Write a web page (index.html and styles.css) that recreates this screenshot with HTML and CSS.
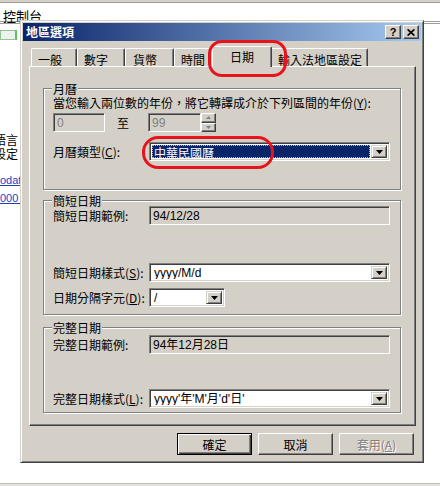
FILE: index.html
```html
<!DOCTYPE html>
<html lang="zh-Hant">
<head>
<meta charset="utf-8">
<title>地區選項</title>
<link rel="stylesheet" href="styles.css">
</head>
<body>
<div class="screen">
  <div class="bg-top"></div>
  <div class="bg-header">控制台</div>
  <div class="bg-main">
    <div class="bg-side">
      <div class="bg-box"></div>
      <div class="bg-text first">語言</div>
      <div class="bg-text">設定</div>
      <a class="bg-link first">odat</a>
      <a class="bg-link">000 :</a>
    </div>
  </div>
  <div class="bg-bottom"></div>

  <div class="dialog">
    <div class="titlebar">
      <span class="title">地區選項</span>
      <div class="caption-btns">
        <span class="cap-btn help">?</span>
        <span class="cap-btn close"><svg width="8" height="7" viewBox="0 0 8 7"><path d="M0.6 0.4L7.4 6.6M7.4 0.4L0.6 6.6" stroke="#000" stroke-width="1.7"/></svg></span>
      </div>
    </div>

    <div class="tabs">
      <div class="tab t1">一般</div>
      <div class="tab t2">數字</div>
      <div class="tab t3">貨幣</div>
      <div class="tab t4">時間</div>
      <div class="tab sel">日期</div>
      <div class="tab t6">輸入法地區設定</div>
    </div>

    <div class="panel">
      <div class="group g1">
        <div class="legend">月曆</div>
        <div class="line">當您輸入兩位數的年份，將它轉譯成介於下列區間的年份(<u>Y</u>):</div>
        <div class="row r-range">
          <div class="edit disabled w-from">0</div>
          <span class="to">至</span>
          <div class="edit disabled w-to">99</div>
          <div class="spin">
            <span class="spin-btn"><svg width="5" height="3" viewBox="0 0 5 3"><path d="M2.5 0L5 3H0z" fill="#808080"/></svg></span>
            <span class="spin-btn"><svg width="5" height="3" viewBox="0 0 5 3"><path d="M0 0h5L2.5 3z" fill="#808080"/></svg></span>
          </div>
        </div>
        <div class="row r-type">
          <span class="lbl">月曆類型(<u>C</u>):</span>
          <div class="combo wide">
            <div class="combo-text selected">中華民國曆</div>
            <span class="dd"><svg width="7" height="4" viewBox="0 0 7 4"><path d="M0 0h7L3.5 4z" fill="#000"/></svg></span>
          </div>
        </div>
      </div>

      <div class="group g2">
        <div class="legend">簡短日期</div>
        <div class="row r-sample">
          <span class="lbl">簡短日期範例:</span>
          <div class="edit readonly wide">94/12/28</div>
        </div>
        <div class="row r-style">
          <span class="lbl">簡短日期樣式(<u>S</u>):</span>
          <div class="combo wide">
            <div class="combo-text">yyyy/M/d</div>
            <span class="dd"><svg width="7" height="4" viewBox="0 0 7 4"><path d="M0 0h7L3.5 4z" fill="#000"/></svg></span>
          </div>
        </div>
        <div class="row r-sep">
          <span class="lbl">日期分隔字元(<u>D</u>):</span>
          <div class="combo narrow">
            <div class="combo-text">/</div>
            <span class="dd"><svg width="7" height="4" viewBox="0 0 7 4"><path d="M0 0h7L3.5 4z" fill="#000"/></svg></span>
          </div>
        </div>
      </div>

      <div class="group g3">
        <div class="legend">完整日期</div>
        <div class="row r-sample3">
          <span class="lbl">完整日期範例:</span>
          <div class="edit readonly wide">94年12月28日</div>
        </div>
        <div class="row r-style3">
          <span class="lbl">完整日期樣式(<u>L</u>):</span>
          <div class="combo wide">
            <div class="combo-text">yyyy'年'M'月'd'日'</div>
            <span class="dd"><svg width="7" height="4" viewBox="0 0 7 4"><path d="M0 0h7L3.5 4z" fill="#000"/></svg></span>
          </div>
        </div>
      </div>
    </div>

    <div class="buttons">
      <span class="btn default">確定</span>
      <span class="btn">取消</span>
      <span class="btn disabled">套用(<u>A</u>)</span>
    </div>
  </div>

  <div class="mark mark-tab"></div>
  <div class="mark mark-combo"></div>
</div>
</body>
</html>
```

FILE: styles.css
```css
* { box-sizing: border-box; }

html, body {
  margin: 0;
  padding: 0;
  background: #fff;
}

body {
  font-family: "Noto Sans CJK TC", "Liberation Sans", sans-serif;
  font-size: 12px;
  line-height: 14px;
  color: #000;
}

u { text-decoration: underline; text-underline-offset: 1px; }

.screen {
  position: relative;
  width: 440px;
  height: 486px;
  overflow: hidden;
  background: #fff;
  display: flex;
  flex-direction: column;
}

/* ---------- background window ---------- */
.bg-top {
  height: 3px;
  background: #d4d0c8;
  border-bottom: 1px solid #a09c98;
}

.bg-header {
  height: 21px;
  padding: 6px 0 0 3px;
  font-size: 13px;
  border-bottom: 3px double #9c9c9c;
}

.bg-main {
  flex: 1;
  display: flex;
}

.bg-side {
  width: 22px;
  overflow: hidden;
  display: flex;
  flex-direction: column;
}

.bg-box {
  margin-top: 6px;
  width: 17px;
  height: 10px;
  border: 1px solid #94c494;
  border-right-width: 2px;
  border-right-color: #5fc05f;
  background: #eef2ee;
}

.bg-text {
  white-space: nowrap;
  margin-left: -6px;
}
.bg-text.first { margin-top: 93px; }

.bg-link {
  font-family: "Liberation Sans", sans-serif;
  font-size: 11px;
  color: #1a3fc0;
  text-decoration: underline;
  white-space: nowrap;
  margin-top: 4px;
}
.bg-link.first { margin-top: 12px; }

.bg-bottom {
  height: 3px;
  border-top: 1px solid #c4c0bc;
  background: #e4e1dc;
}

/* ---------- dialog window ---------- */
.dialog {
  position: absolute;
  left: 20px;
  top: 20px;
  width: 404px;
  height: 443px;
  background: #d4d0c8;
  border: 1px solid;
  border-color: #d4d0c8 #404040 #404040 #d4d0c8;
  box-shadow: inset 1px 1px #fff, inset -1px -1px #808080;
  padding: 2px;
  display: flex;
  flex-direction: column;
}

.titlebar {
  height: 18px;
  background: linear-gradient(to right, #0a246a, #a6caf0);
  display: flex;
  align-items: center;
  padding: 0 2px 0 3px;
}

.title {
  color: #fff;
  font-weight: bold;
  font-size: 12px;
}

.caption-btns {
  margin-left: auto;
  display: flex;
  gap: 2px;
}

.cap-btn {
  width: 16px;
  height: 14px;
  background: #d4d0c8;
  border: 1px solid;
  border-color: #fff #404040 #404040 #fff;
  box-shadow: inset -1px -1px #808080;
  display: flex;
  align-items: center;
  justify-content: center;
}

.cap-btn.help {
  font-family: "Liberation Sans", sans-serif;
  font-weight: bold;
  font-size: 11px;
  line-height: 11px;
}

/* ---------- tabs ---------- */
.tabs {
  display: flex;
  align-items: flex-start;
  height: 21px;
  margin: 5px 0 -1px 8px;
  position: relative;
  z-index: 1;
}

.tab {
  height: 18px;
  margin-top: 2px;
  padding: 4px 0 0 6px;
  background: #d4d0c8;
  border-top: 1px solid #fff;
  border-left: 1px solid #fff;
  border-right: 1px solid #404040;
  box-shadow: inset -1px 0 #808080;
  border-radius: 2px 2px 0 0;
  white-space: nowrap;
}

.t1 { width: 46px; }
.t2 { width: 48px; }
.t3 { width: 49px; padding-left: 7px; }
.t4 { width: 40px; }
.t6 { width: 98px; padding-left: 7px; }

.tab.sel {
  width: 60px;
  height: 21px;
  margin: 0 -2px;
  padding: 3px 0 0 0;
  text-align: center;
  position: relative;
  z-index: 2;
}

/* ---------- panel ---------- */
.panel {
  height: 360px;
  margin: 0 5px 0 6px;
  border: 1px solid;
  border-color: #fff #404040 #404040 #fff;
  box-shadow: inset -1px -1px #808080;
  padding: 21px 14px 0 13px;
}

.group {
  border: 1px solid #808080;
  box-shadow: inset 1px 1px #fff, 1px 1px #fff;
  padding: 0 0 0 9px;
  display: flex;
  flex-direction: column;
  align-items: flex-start;
}

.legend {
  margin: -7px 0 -7px -1px;
  padding: 0 1px;
  height: 14px;
  background: #d4d0c8;
}

.g1 { padding-bottom: 28px; }
.g2 { margin-top: 10px; padding-bottom: 7px; }
.g3 { margin-top: 12px; padding-bottom: 4px; }

.line { margin-top: 7px; white-space: nowrap; }

.row {
  display: flex;
  align-items: center;
  height: 19px;
}

.r-range { margin-top: 3px; }
.r-type { margin-top: 10px; }
.r-sample { margin-top: 5px; }
.r-style { margin-top: 38px; }
.r-sep { margin-top: 6px; }
.r-sample3 { margin-top: 7px; }
.r-style3 { margin-top: 35px; }

.lbl {
  width: 96px;
  white-space: nowrap;
}

.to {
  width: 43px;
  padding-left: 12px;
}

/* ---------- edits & combos ---------- */
.edit, .combo {
  height: 19px;
  border: 1px solid;
  border-color: #808080 #fff #fff #808080;
  box-shadow: inset 1px 1px #404040, inset -1px -1px #d4d0c8;
}

.edit {
  padding: 2px 3px 0 3px;
  font-family: "Liberation Sans", "Noto Sans CJK TC", sans-serif;
  white-space: nowrap;
}

.edit.disabled {
  background: #d4d0c8;
  color: #808080;
}

.edit.readonly {
  background: #d4d0c8;
}

.w-from { width: 52px; }
.w-to { width: 53px; }
.wide { width: 241px; }
.narrow { width: 76px; }

.spin {
  width: 15px;
  height: 19px;
  display: flex;
  flex-direction: column;
}

.spin-btn {
  flex: 1;
  background: #d4d0c8;
  border: 1px solid;
  border-color: #fff #404040 #404040 #fff;
  box-shadow: inset -1px -1px #808080;
  display: flex;
  align-items: center;
  justify-content: center;
}

.combo {
  background: #fff;
  padding: 2px;
  display: flex;
}

.combo-text {
  flex: 1;
  padding: 0 0 0 2px;
  font-family: "Liberation Sans", "Noto Sans CJK TC", sans-serif;
  line-height: 15px;
  white-space: nowrap;
  overflow: hidden;
}

.combo-text.selected {
  background: #0a246a;
  color: #fff;
  font-family: "Noto Sans CJK TC", sans-serif;
  outline: 1px dotted #b8b4a8;
  outline-offset: -1px;
  margin-right: 1px;
}

.dd {
  width: 16px;
  background: #d4d0c8;
  border: 1px solid;
  border-color: #d4d0c8 #404040 #404040 #d4d0c8;
  box-shadow: inset 1px 1px #fff, inset -1px -1px #808080;
  display: flex;
  align-items: center;
  justify-content: center;
}

/* ---------- buttons ---------- */
.buttons {
  display: flex;
  justify-content: flex-end;
  gap: 6px;
  margin: 7px 7px 0 0;
}

.btn {
  width: 75px;
  height: 22px;
  background: #d4d0c8;
  border: 1px solid;
  border-color: #fff #404040 #404040 #fff;
  box-shadow: inset -1px -1px #808080;
  display: flex;
  align-items: center;
  justify-content: center;
  padding-top: 1px;
}

.btn.default {
  border-color: #000;
  box-shadow: inset 1px 1px #fff, inset -1px -1px #404040, inset -2px -2px #808080;
}

.btn.disabled {
  color: #808080;
  text-shadow: 1px 1px #fff;
}

/* ---------- red annotation marks ---------- */
.mark {
  position: absolute;
  border: 3px solid #e8141c;
  z-index: 5;
}

.mark-tab {
  left: 208px;
  top: 40px;
  width: 79px;
  height: 37px;
  border-radius: 14px;
}

.mark-combo {
  left: 142px;
  top: 136px;
  width: 132px;
  height: 33px;
  border-radius: 16px;
}
```
